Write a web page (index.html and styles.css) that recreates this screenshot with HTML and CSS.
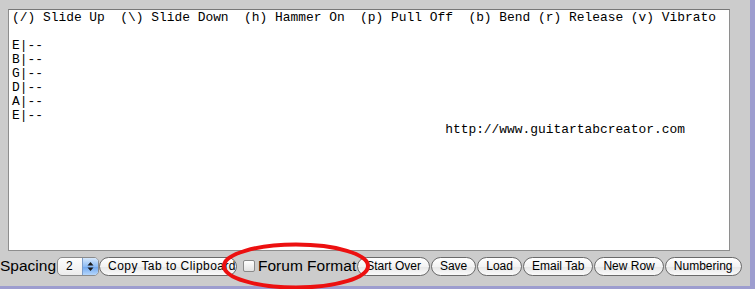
FILE: index.html
```html
<html>
<head>
  <link rel="stylesheet" href="styles.css">
</head>
<body>
<div class="panel">
<div class="tab-area">(/) Slide Up  (\) Slide Down  (h) Hammer On  (p) Pull Off  (b) Bend (r) Release (v) Vibrato

E|--
B|--
G|--
D|--
A|--
E|--
                                                        http://www.guitartabcreator.com</div>
<div class="toolbar">
<span class="label">Spacing</span>
<span class="select"><span class="select-value">2</span><span class="select-arrows"><svg width="7" height="11" viewBox="0 0 7 11"><path d="M3.5 1 L6.5 4.5 L0.5 4.5 Z M3.5 10 L6.5 6.5 L0.5 6.5 Z" fill="#1a1a1a"/></svg></span></span>
<a href="#" class="button copy-button">Copy Tab to Clipboard</a>
<span class="checkbox"></span>
<span class="label forum-label">Forum Format</span>
<a href="#" class="button">Start Over</a>
<a href="#" class="button">Save</a>
<a href="#" class="button">Load</a>
<a href="#" class="button">Email Tab</a>
<a href="#" class="button">New Row</a>
<a href="#" class="button">Numbering</a>
</div>
</div>
<svg class="highlight" width="152" height="50" viewBox="0 0 152 50"><ellipse cx="76" cy="25" rx="72" ry="21.5" fill="none" stroke="#ec1010" stroke-width="4"/></svg>
</body>
</html>
```

FILE: styles.css
```css
body {
  margin: 0;
  padding: 0;
  background-color: #9d9dcf;
  font-family: "Liberation Sans", Arial, sans-serif;
  position: relative;
  height: 289px;
  overflow: hidden;
}

.panel {
  width: 750px;
  height: 286px;
  background-color: #cccccc;
  padding-top: 9px;
  box-sizing: border-box;
}

.tab-area {
  margin-left: 8px;
  width: 722px;
  height: 242px;
  box-sizing: border-box;
  border: 1px solid #8e8e8e;
  border-top-color: #777;
  background-color: #fff;
  padding: 1px 3px;
  font-family: "Liberation Mono", "Courier New", monospace;
  font-size: 12.9px;
  line-height: 14px;
  white-space: pre;
  color: #000;
}

.toolbar {
  display: flex;
  align-items: center;
  margin-top: 5px;
  height: 20px;
}

.label {
  font-size: 15.5px;
  color: #000;
  line-height: 20px;
}

.select {
  display: flex;
  width: 42px;
  height: 19px;
  box-sizing: border-box;
  margin-left: 1px;
  border: 1px solid #8a8a8a;
  border-radius: 5px;
  background: linear-gradient(#fdfdfd, #ececec);
  overflow: hidden;
}

.select-value {
  flex: 1;
  font-size: 12px;
  line-height: 17px;
  padding-left: 8px;
}

.select-arrows {
  width: 15px;
  display: flex;
  align-items: center;
  justify-content: center;
  background: linear-gradient(#d6e8fc, #8ebcf4 50%, #6ea6ef 51%, #b5d6fb);
  border-left: 1px solid #7b9cc9;
}

.button {
  display: block;
  height: 19px;
  box-sizing: border-box;
  margin-left: 1px;
  padding: 0 8px;
  border: 1px solid #6a6a6a;
  border-radius: 10px;
  background: linear-gradient(#ffffff, #f3f3f3 50%, #e6e6e6 51%, #fafafa);
  font-size: 12px;
  line-height: 17px;
  color: #000;
  text-decoration: none;
  white-space: nowrap;
}

.copy-button {
  width: 138px;
  margin-left: 0;
  overflow: hidden;
  letter-spacing: 0.45px;
}

.checkbox {
  width: 12px;
  height: 12px;
  box-sizing: border-box;
  margin-left: 6px;
  margin-right: 3px;
  border: 1px solid #8a8a8a;
  border-radius: 2px;
  background: linear-gradient(#ffffff, #e2e2e2);
}

.forum-label {
  margin-right: 0;
}

.highlight {
  position: absolute;
  left: 220px;
  top: 241px;
}
```
